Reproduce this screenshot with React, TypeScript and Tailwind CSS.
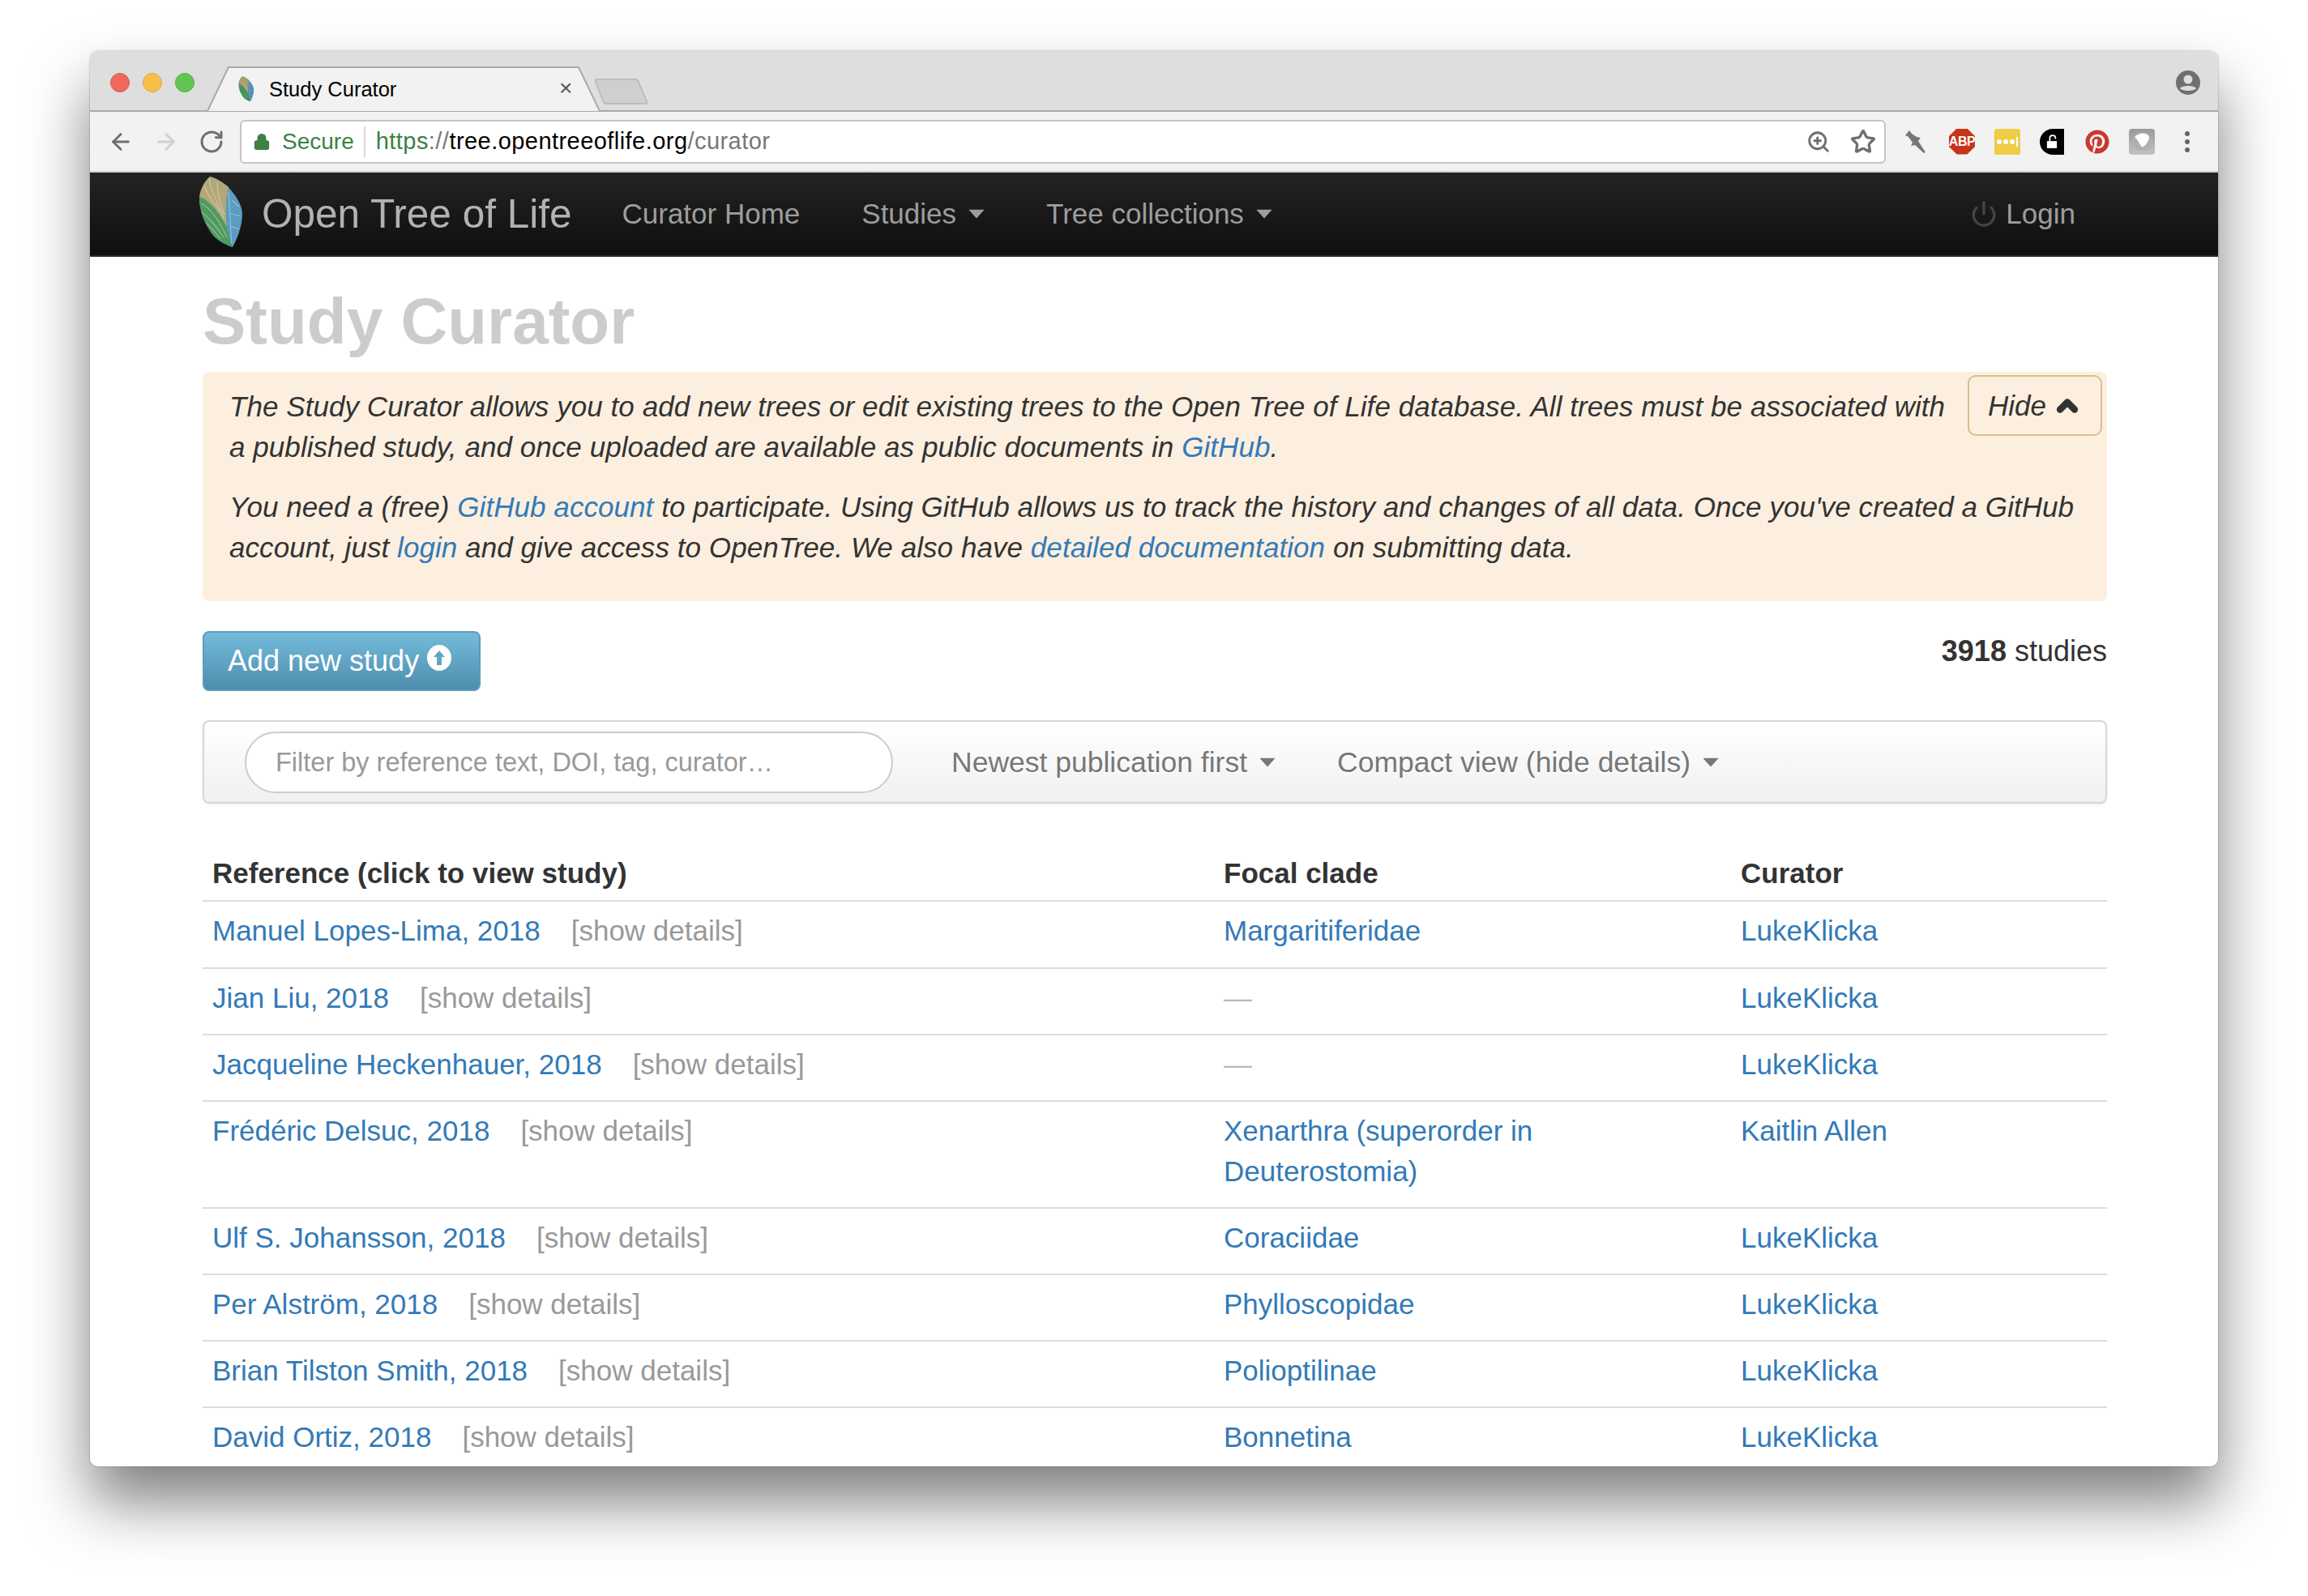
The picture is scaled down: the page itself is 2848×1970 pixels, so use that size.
import React, { useId } from "react";
import { ArrowLeft, ArrowRight, RotateCw, ZoomIn, Star, Power, ChevronUp, Lock } from "lucide-react";
import { FaPinterest } from "react-icons/fa";

function Leaf({ className, dim }: { className: string; dim?: boolean }) {
  const id = useId();
  const tan = dim ? "#a89a68" : "#b3a778";
  const green = dim ? "#3f8f55" : "#4f9a5e";
  const blue = dim ? "#4a8fb5" : "#5a9cc2";
  return (
    <svg viewBox="0 0 54 90" className={className}>
      <defs>
        <clipPath id={id}>
          <path d="M13 1C22 3 30 9 36 14C46 26 53 36 53 48C53 62 46 80 41 88C30 84 18 78 12 66C4 54 0 40 0 27C1 16 7 6 13 1Z" />
        </clipPath>
      </defs>
      <g clipPath={`url(#${id})`}>
        <rect width="54" height="90" fill={blue} />
        <path d="M-2 -2H38L36 14C32 28 32 48 34 64C24 44 12 30 -2 25Z" fill={tan} />
        <path d="M-2 25C12 30 24 44 34 64L41 90H-2Z" fill={green} />
        <g fill="none" stroke="#fff" strokeOpacity="0.35" strokeWidth="1.2">
          <path d="M12 4C14 14 20 30 30 52M22 8C22 20 26 36 31 48M6 12C10 24 18 34 26 44" />
          <path d="M2 34C14 40 24 54 34 76M2 44C10 50 22 64 30 76M8 58C14 62 20 70 26 78" />
          <path d="M36 20C38 40 38 64 40 84M40 30L49 38M37 46L51 50M38 62L49 66" />
        </g>
      </g>
    </svg>
  );
}

function Caret({ color, className }: { color: string; className?: string }) {
  return (
    <svg viewBox="0 0 22 12" className={`w-[22px] h-[12px] ${className ?? ""}`}>
      <path d="M0 0H22L11 12Z" fill={color} />
    </svg>
  );
}

const rows: [string, string | null, string][] = [
  ["Manuel Lopes-Lima, 2018", "Margaritiferidae", "LukeKlicka"],
  ["Jian Liu, 2018", null, "LukeKlicka"],
  ["Jacqueline Heckenhauer, 2018", null, "LukeKlicka"],
  ["Frédéric Delsuc, 2018", "Xenarthra (superorder in Deuterostomia)", "Kaitlin Allen"],
  ["Ulf S. Johansson, 2018", "Coraciidae", "LukeKlicka"],
  ["Per Alström, 2018", "Phylloscopidae", "LukeKlicka"],
  ["Brian Tilston Smith, 2018", "Polioptilinae", "LukeKlicka"],
  ["David Ortiz, 2018", "Bonnetina", "LukeKlicka"],
];

const link = "text-[#337ab7]";

export default function App() {
  return (
    <div className="w-[2848px] h-[1970px] bg-white pt-[63px] pl-[111px] overflow-hidden font-['Liberation_Sans',Arial,sans-serif] text-[#333]">
      <div className="w-[2626px] h-[1747px] rounded-[10px] shadow-[0_44px_76px_0_rgba(0,0,0,0.5),0_0_2px_rgba(0,0,0,0.4)]">
        <div className="w-full h-full rounded-[10px] overflow-hidden bg-white flex flex-col">
          {/* Tab strip */}
          <div className="relative h-[75px] shrink-0 bg-[#dedede] border-b-2 border-[#a9a9a9] flex items-start">
            <div className="flex gap-[16px] ml-[25px] mt-[27px]">
              <div className="w-[24px] h-[24px] rounded-full bg-[#f1685e] border border-[#dd5a50]" />
              <div className="w-[24px] h-[24px] rounded-full bg-[#f9bf4d] border border-[#e0a63c]" />
              <div className="w-[24px] h-[24px] rounded-full bg-[#62c554] border border-[#52ae46]" />
            </div>
            <div className="relative ml-[16px] mt-[19px] w-[484px] h-[56px] flex items-center">
              <svg viewBox="0 0 484 56" className="absolute inset-0 w-[484px] h-[56px]">
                <path d="M0 55L26 1H458L484 55" fill="#f2f2f2" stroke="#a9a9a9" strokeWidth="2" />
              </svg>
              <Leaf dim className="relative ml-[37px] w-[22px] h-[32px]" />
              <span className="relative ml-[17px] text-[25.5px] leading-[30px] text-black">Study Curator</span>
              <span className="absolute left-[434px] top-[12px] text-[28px] leading-[30px] text-[#555]">×</span>
            </div>
            <svg viewBox="0 0 66 32" className="ml-[-6px] mt-[34px] w-[66px] h-[32px]">
              <path d="M2 1H50C52 1 53 2 54 4L64 28C65 30 64 31 62 31H14C12 31 11 30 10 28L1 4C0 2 1 1 2 1Z" fill="#cfcfcf" stroke="#b5b5b5" strokeWidth="1.5" />
            </svg>
            <svg viewBox="0 0 30 30" className="absolute left-[2574px] top-[24px] w-[30px] h-[30px]">
              <circle cx="15" cy="15" r="15" fill="#6f6f6f" />
              <circle cx="15" cy="11" r="5.5" fill="#dedede" />
              <path d="M5 22C8 18 22 18 25 22C22 26 8 26 5 22Z" fill="#dedede" />
            </svg>
          </div>

          {/* Toolbar */}
          <div className="h-[75px] shrink-0 bg-[#f2f2f2] border-b-2 border-[#d0d0d0] flex items-center">
            <ArrowLeft className="ml-[22px] w-[32px] h-[32px] text-[#6f6f6f]" strokeWidth={2.2} />
            <ArrowRight className="ml-[24px] w-[32px] h-[32px] text-[#d0d0d0]" strokeWidth={2.2} />
            <RotateCw className="ml-[24px] w-[32px] h-[32px] text-[#6f6f6f]" strokeWidth={2.2} />
            <div className="ml-[19px] w-[2031px] h-[54px] bg-white rounded-[6px] border-2 border-[#c4c4c4] flex items-center text-[28px]">
              <Lock className="ml-[14px] w-[22px] h-[26px] text-[#3c8043]" fill="#3c8043" strokeWidth={2} />
              <span className="ml-[14px] text-[#3c8043]">Secure</span>
              <div className="ml-[12px] w-[2px] h-[38px] bg-[#d8d8d8]" />
              <div className="ml-[13px] text-[29px] tracking-[0.45px] flex">
                <span className="text-[#3c8043]">https</span>
                <span className="text-[#777]">://</span>
                <span className="text-black">tree.opentreeoflife.org</span>
                <span className="text-[#777]">/curator</span>
              </div>
              <ZoomIn className="ml-auto w-[30px] h-[30px] text-[#6f6f6f]" strokeWidth={2.3} />
              <Star className="ml-[24px] mr-[10px] w-[32px] h-[32px] text-[#6f6f6f]" strokeWidth={2.5} />
            </div>
            {/* Extensions */}
            <svg viewBox="0 0 28 30" className="ml-[22px] w-[28px] h-[30px]">
              <path d="M7 1L2 7L6 9L11 16L9 20L14 19L25 29L27 28L18 14L21 10L16 9L10 5Z" fill="#777" />
            </svg>
            <div className="ml-[28px] w-[32px] h-[32px] bg-[#c8341a] [clip-path:polygon(30%_0,70%_0,100%_30%,100%_70%,70%_100%,30%_100%,0_70%,0_30%)] flex items-center justify-center text-white font-bold text-[16px] leading-none tracking-[-0.5px]">ABP</div>
            <div className="ml-[24px] w-[32px] h-[32px] rounded-[3px] bg-[#eecd45] flex items-center justify-center gap-[2px]">
              <span className="w-[6px] h-[6px] rounded-full bg-white" />
              <span className="w-[6px] h-[6px] rounded-full bg-white" />
              <span className="w-[6px] h-[6px] rounded-full bg-white" />
              <span className="w-[1.5px] h-[12px] bg-white" />
            </div>
            <div className="ml-[24px] w-[30px] h-[32px] bg-black rounded-l-[16px] flex items-center justify-center">
              <svg viewBox="0 0 16 20" className="w-[14px] h-[18px]">
                <path d="M4 9V5C4 2 6 1 8 1C10 1 12 2 12 5V6" fill="none" stroke="#fff" strokeWidth="2" transform="translate(1 0)" />
                <rect x="1" y="9" width="14" height="10" fill="#fff" />
              </svg>
            </div>
            <FaPinterest className="ml-[26px] w-[30px] h-[30px] text-[#c9392f]" />
            <div className="ml-[24px] w-[32px] h-[32px] rounded-[4px] bg-gradient-to-b from-[#9a9a9a] to-[#c2c2c2] flex items-center justify-center">
              <svg viewBox="0 0 24 24" className="w-[25px] h-[25px]">
                <circle cx="12" cy="12" r="11" fill="#b0b0b0" />
                <path d="M3 7C7 2 17 1 20 6C20 12 16 17 12 19C8 15 7 10 3 7Z" fill="#fff" />
              </svg>
            </div>
            <div className="ml-[37px] flex flex-col gap-[4px]">
              <span className="w-[6px] h-[6px] rounded-full bg-[#666]" />
              <span className="w-[6px] h-[6px] rounded-full bg-[#666]" />
              <span className="w-[6px] h-[6px] rounded-full bg-[#666]" />
            </div>
          </div>

          {/* Navbar */}
          <div className="h-[104px] shrink-0 bg-gradient-to-b from-[#232323] to-[#0f0f0f] border-b-2 border-[#2a2a2a] flex items-center text-[#9d9d9d] text-[35px]">
            <Leaf className="ml-[135px] w-[54px] h-[90px] mt-[-4px]" />
            <span className="ml-[23px] text-[49.5px] text-[#b2b2b2]">Open Tree of Life</span>
            <span className="ml-[62px]">Curator Home</span>
            <span className="ml-[76px]">Studies</span>
            <Caret color="#9d9d9d" className="ml-[14px] scale-90" />
            <span className="ml-[75px]">Tree collections</span>
            <Caret color="#9d9d9d" className="ml-[14px] scale-90" />
            <Power className="ml-auto w-[34px] h-[34px] text-[#444]" strokeWidth={2.4} />
            <span className="ml-[10px] mr-[176px]">Login</span>
          </div>

          {/* Content */}
          <div className="pl-[139px] w-[2489px] text-[35px] leading-[50px]">
            <h1 className="mt-[30px] mb-[12px] h-[100px] text-[80px] leading-[100px] font-bold text-[#cccccc]">Study Curator</h1>

            <div className="h-[283px] rounded-[8px] bg-[#fcefdf] px-[33px] pt-[18px] italic text-[#333] tracking-[0.06px]">
              <button className="float-right -mr-[27px] -mt-[14px] ml-[26px] w-[166px] h-[75px] rounded-[10px] border-2 border-[#dabd8d] flex items-center justify-center gap-[8px] italic">
                Hide
                <ChevronUp className="w-[36px] h-[36px] text-[#333]" strokeWidth={5.5} />
              </button>
              <p className="mb-[24px]">
                The Study Curator allows you to add new trees or edit existing trees to the Open Tree of Life database. All trees must be associated with a published study, and once uploaded are available as public documents in <span className={link}>GitHub</span>.
              </p>
              <p>
                You need a (free) <span className={link}>GitHub account</span> to participate. Using GitHub allows us to track the history and changes of all data. Once you've created a GitHub account, just <span className={link}>login</span> and give access to OpenTree. We also have <span className={link}>detailed documentation</span> on submitting data.
              </p>
            </div>

            <div className="mt-[37px] flex justify-between items-start">
              <button className="w-[343px] h-[74px] rounded-[8px] border-2 border-[#5d9bb9] bg-gradient-to-b from-[#74bbdb] to-[#4e8ead] text-white text-[36px] flex items-center pl-[29px] gap-[10px]">
                Add new study
                <svg viewBox="0 0 30 32" className="w-[30px] h-[32px] mt-[-8px]">
                  <ellipse cx="15" cy="16" rx="15" ry="16" fill="#fff" />
                  <path d="M15 7L22 15H18V25H12V15H8Z" fill="#5fa5c6" />
                </svg>
              </button>
              <span className="text-[36px]"><b>3918</b> studies</span>
            </div>

            <div className="mt-[36px] h-[103px] rounded-[8px] border-2 border-[#d6d6d6] bg-gradient-to-b from-white to-[#f0f0f0] flex items-center text-[#777] text-[35.5px] [text-shadow:0_2px_0_#fff] shadow-[0_2px_4px_rgba(0,0,0,0.06)]">
              <div className="ml-[50px] w-[800px] h-[76px] rounded-full border-2 border-[#cccccc] bg-white flex items-center pl-[36px] text-[32.5px] text-[#999] [text-shadow:none]">
                Filter by reference text, DOI, tag, curator…
              </div>
              <span className="ml-[72px]">Newest publication first</span>
              <Caret color="#777" className="ml-[14px] scale-90" />
              <span className="ml-[75px]">Compact view (hide details)</span>
              <Caret color="#777" className="ml-[14px] scale-90" />
            </div>

            <div className="mt-[61px]">
              <div className="grid grid-cols-[1248px_638px_1fr] font-bold h-[60px] border-b-2 border-[#dddddd]">
                <div className="px-[12px]">Reference (click to view study)</div>
                <div className="px-[12px]">Focal clade</div>
                <div className="px-[12px]">Curator</div>
              </div>
              {rows.map((r, i) => (
                <div key={i} className={`grid grid-cols-[1248px_638px_1fr] ${i > 0 ? "border-t-2 border-[#dddddd] pt-[11px] pb-[19px]" : "pt-[11px] pb-[20px]"}`}>
                  <div className="px-[12px] flex gap-[38px]">
                    <span className={link}>{r[0]}</span>
                    <span className="text-[#999]">[show details]</span>
                  </div>
                  <div className="px-[12px]">
                    {r[1] ? <span className={link}>{r[1]}</span> : <span className="text-[#bbb]">—</span>}
                  </div>
                  <div className="px-[12px]"><span className={link}>{r[2]}</span></div>
                </div>
              ))}
            </div>
          </div>
        </div>
      </div>
    </div>
  );
}
